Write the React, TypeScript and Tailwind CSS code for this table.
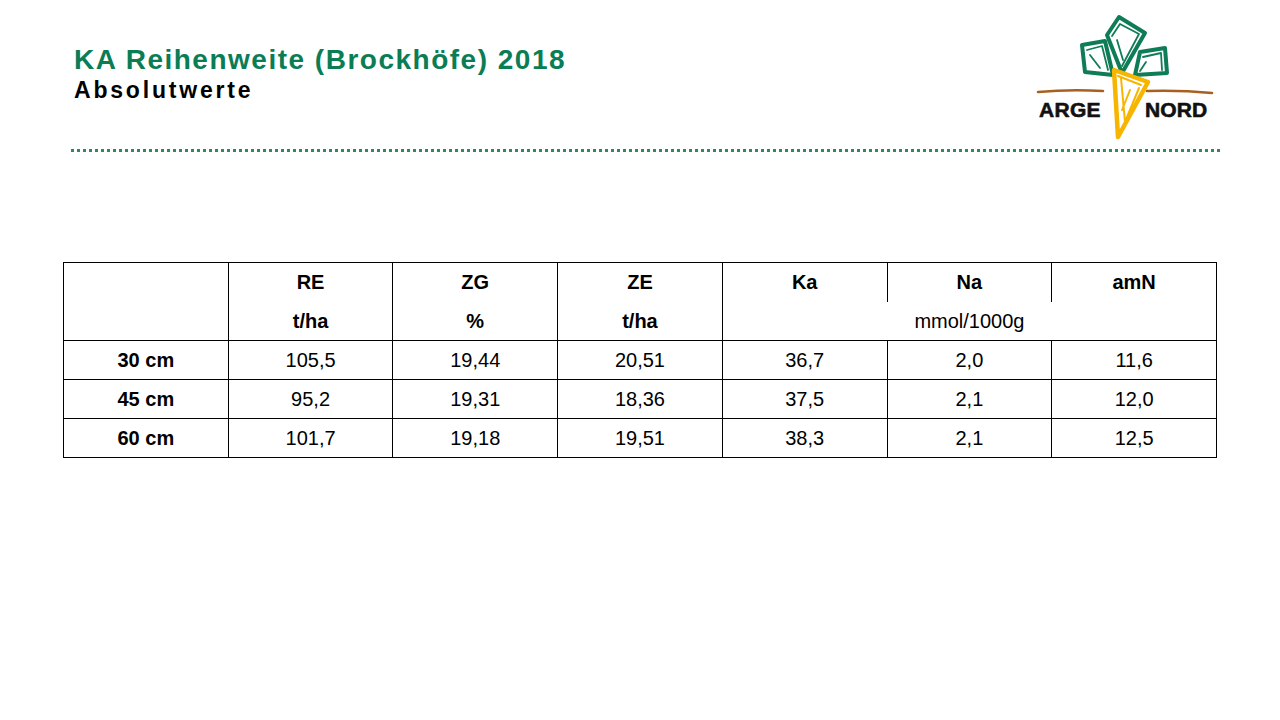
import React from "react";

const font = { fontFamily: '"Liberation Sans", Arial, sans-serif' };

const units = ["t/ha", "%", "t/ha"];

const rows = [
  { label: "30 cm", values: ["105,5", "19,44", "20,51", "36,7", "2,0", "11,6"] },
  { label: "45 cm", values: ["95,2", "19,31", "18,36", "37,5", "2,1", "12,0"] },
  { label: "60 cm", values: ["101,7", "19,18", "19,51", "38,3", "2,1", "12,5"] },
];

function Logo() {
  return (
    <svg
      viewBox="1030 10 190 135"
      className="w-[190px] h-[135px] shrink-0"
      fill="none"
      strokeLinecap="round"
      strokeLinejoin="round"
    >
      {/* leaves */}
      <g stroke="#0e7d55" strokeWidth="4">
        <path d="M1082 45 L1105 41 L1113 75 L1085 72 Z" />
        <path d="M1087 50 L1102 46 L1108 70 M1090 55 L1100 68" strokeWidth="1.8" />
        <path d="M1119 17 L1107 35 L1122 73 L1145 33 Z" />
        <path d="M1112 36 L1120 24 L1139 34 L1122 66 M1117 40 L1123 60" strokeWidth="1.8" />
        <path d="M1140 52 L1165 48 L1167 73 L1135 75 Z" />
        <path d="M1143 57 L1161 53 L1162 70 M1146 62 L1140 71" strokeWidth="1.8" />
      </g>
      {/* soil line */}
      <g stroke="#a8601e" strokeWidth="2.6">
        <path d="M1038 92 Q1070 89 1103 91" />
        <path d="M1147 91 Q1180 90 1212 93" />
      </g>
      {/* carrot */}
      <g stroke="#f7b500" strokeWidth="4.5">
        <path d="M1114 70 L1148 82 L1118 137 Z" fill="#ffffff" />
        <path d="M1121 78 L1125 122 L1139 88 M1118 76 L1141 85 M1130 90 L1122 110" strokeWidth="2" />
      </g>
      <g
        fill="#111"
        stroke="#111"
        strokeWidth="0.6"
        style={{ fontFamily: '"Liberation Sans", Arial, sans-serif', fontWeight: 700 }}
        fontSize="21"
      >
        <text x="1039" y="117" letterSpacing="0.3">
          ARGE
        </text>
        <text x="1145" y="117" letterSpacing="0.1">
          NORD
        </text>
      </g>
    </svg>
  );
}

export default function App() {
  return (
    <div className="w-[1280px] h-[720px] bg-white text-black" style={font}>
      {/* Header */}
      <div className="h-[149px] flex items-start justify-between">
        <div className="ml-[74px] mt-[44px]">
          <h1 className="text-[28px] leading-[32px] font-bold tracking-[1.5px] text-[#0a7d55]">
            KA Reihenweite (Brockhöfe) 2018
          </h1>
          <h2 className="text-[23px] leading-[28px] font-bold tracking-[2.8px]">
            Absolutwerte
          </h2>
        </div>
        <div className="mr-[60px] mt-[10px]">
          <Logo />
        </div>
      </div>

      {/* dotted rule */}
      <div className="ml-[71px] w-[1150px] h-[3px] bg-[repeating-linear-gradient(90deg,#2e8a5c_0_3px,transparent_3px_6px)]" />

      {/* Table */}
      <table className="ml-[63px] mt-[110px] w-[1154px] table-fixed border-collapse text-[20px] text-center">
        <thead>
          <tr className="h-[39px]">
            <th rowSpan={2} className="border border-black font-bold" />
            <th className="border-x border-t border-black font-bold">RE</th>
            <th className="border-x border-t border-black font-bold">ZG</th>
            <th className="border-x border-t border-black font-bold">ZE</th>
            <th className="border-l border-t border-black font-bold">Ka</th>
            <th className="border-l border-t border-black font-bold">Na</th>
            <th className="border-l border-r border-t border-black font-bold">amN</th>
          </tr>
          <tr className="h-[39px]">
            {units.map((u, i) => (
              <th key={i} className="border-x border-b border-black font-bold">
                {u}
              </th>
            ))}
            <th colSpan={3} className="border-x border-b border-black font-normal">
              mmol/1000g
            </th>
          </tr>
        </thead>
        <tbody>
          {rows.map((r) => (
            <tr key={r.label} className="h-[39px]">
              <td className="border border-black font-bold">{r.label}</td>
              {r.values.map((v, i) => (
                <td key={i} className="border border-black">
                  {v}
                </td>
              ))}
            </tr>
          ))}
        </tbody>
      </table>
    </div>
  );
}
